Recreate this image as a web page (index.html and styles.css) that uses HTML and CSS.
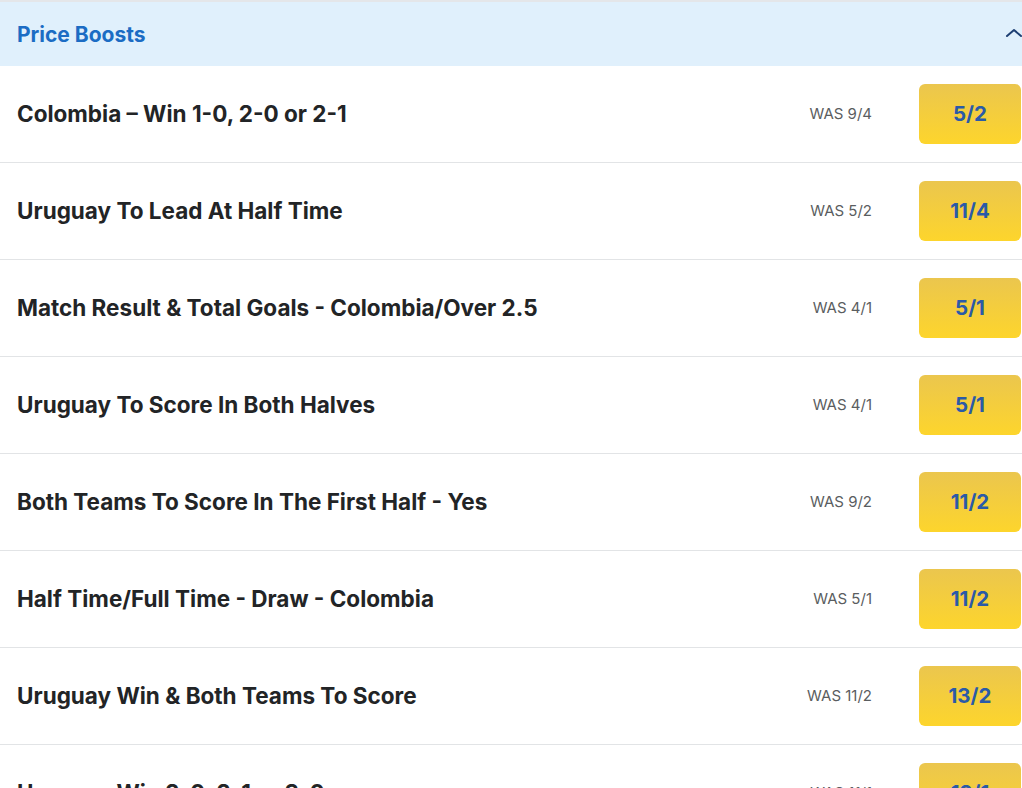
FILE: index.html
```html
<!DOCTYPE html>
<html>
<head>
<meta charset="utf-8">
<link rel="stylesheet" href="styles.css">
</head>
<body>
<div class="panel">
  <div class="head">
    <span class="head-title">Price Boosts</span>
    <svg class="chev" width="18" height="12" viewBox="0 0 18 12"><path d="M2 9 L9 3 L16 9" fill="none" stroke="#1d3f73" stroke-width="2" stroke-linecap="round" stroke-linejoin="round"/></svg>
  </div>
  <div class="row"><span class="name">Colombia – Win 1-0, 2-0 or 2-1</span><span class="was">WAS 9/4</span><span class="odds">5/2</span></div>
  <div class="row"><span class="name">Uruguay To Lead At Half Time</span><span class="was">WAS 5/2</span><span class="odds">11/4</span></div>
  <div class="row"><span class="name">Match Result &amp; Total Goals - Colombia/Over 2.5</span><span class="was">WAS 4/1</span><span class="odds">5/1</span></div>
  <div class="row"><span class="name">Uruguay To Score In Both Halves</span><span class="was">WAS 4/1</span><span class="odds">5/1</span></div>
  <div class="row"><span class="name">Both Teams To Score In The First Half - Yes</span><span class="was">WAS 9/2</span><span class="odds">11/2</span></div>
  <div class="row"><span class="name">Half Time/Full Time - Draw - Colombia</span><span class="was">WAS 5/1</span><span class="odds">11/2</span></div>
  <div class="row"><span class="name">Uruguay Win &amp; Both Teams To Score</span><span class="was">WAS 11/2</span><span class="odds">13/2</span></div>
  <div class="row"><span class="name">Uruguay Win 2-0, 2-1 or 3-0</span><span class="was">WAS 11/1</span><span class="odds">12/1</span></div>
</div>
</body>
</html>
```
FILE: styles.css
```css
html, body {
  margin: 0;
  padding: 0;
  background: #fff;
  overflow: hidden;
}
body {
  font-family: Inter, "Liberation Sans", sans-serif;
}
.panel {
  border-top: 2px solid #e4e6e9;
}
.head {
  height: 64px;
  background: #e0f0fc;
  display: flex;
  align-items: center;
  justify-content: space-between;
  padding-left: 17px;
}
.head-title {
  color: #1b6cc4;
  font-size: 21px;
  font-weight: 700;
}
.chev {
  margin-right: -1px;
  margin-top: -2px;
}
.row {
  height: 96px;
  border-bottom: 1px solid #e2e4e6;
  display: flex;
  align-items: center;
  padding-left: 17px;
  padding-right: 1px;
}
.name {
  flex: 1;
  font-size: 22.5px;
  font-weight: 700;
  color: #222426;
  padding-bottom: 2px;
}
.was {
  font-size: 15px;
  color: #5a5d60;
  margin-right: 47px;
  padding-bottom: 2px;
}
.odds {
  width: 102px;
  height: 60px;
  box-sizing: border-box;
  padding-bottom: 2px;
  border-radius: 6px;
  background: linear-gradient(#ebc64e, #fdd52c);
  display: flex;
  align-items: center;
  justify-content: center;
  color: #2a5aa8;
  font-size: 20.5px;
  font-weight: 700;
}
```
